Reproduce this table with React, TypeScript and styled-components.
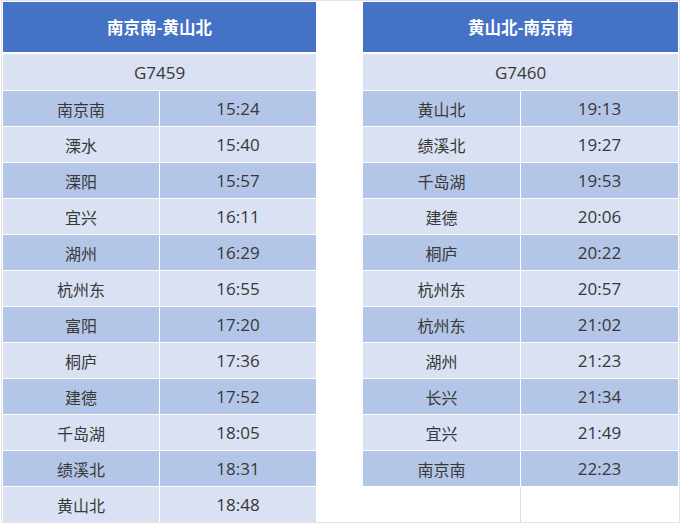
import React from "react";
import styled, { createGlobalStyle } from "styled-components";

type Stop = { station: string; time: string };

type Timetable = {
  title: string;
  train: string;
  colWidth: number;
  stops: Stop[];
  blankRows: number;
};

const _ROW_HEIGHT = 35;

const tables: Timetable[] = [
  {
    title: "南京南-黄山北",
    train: "G7459",
    colWidth: 156,
    blankRows: 0,
    stops: [
      { station: "南京南", time: "15:24" },
      { station: "溧水", time: "15:40" },
      { station: "溧阳", time: "15:57" },
      { station: "宜兴", time: "16:11" },
      { station: "湖州", time: "16:29" },
      { station: "杭州东", time: "16:55" },
      { station: "富阳", time: "17:20" },
      { station: "桐庐", time: "17:36" },
      { station: "建德", time: "17:52" },
      { station: "千岛湖", time: "18:05" },
      { station: "绩溪北", time: "18:31" },
      { station: "黄山北", time: "18:48" },
    ],
  },
  {
    title: "黄山北-南京南",
    train: "G7460",
    colWidth: 157,
    blankRows: 1,
    stops: [
      { station: "黄山北", time: "19:13" },
      { station: "绩溪北", time: "19:27" },
      { station: "千岛湖", time: "19:53" },
      { station: "建德", time: "20:06" },
      { station: "桐庐", time: "20:22" },
      { station: "杭州东", time: "20:57" },
      { station: "杭州东", time: "21:02" },
      { station: "湖州", time: "21:23" },
      { station: "长兴", time: "21:34" },
      { station: "宜兴", time: "21:49" },
      { station: "南京南", time: "22:23" },
    ],
  },
];

export default () => {
  const [outbound, inbound] = tables;
  return (
    <>
      <GlobalStyle />
      <Board>
        <Schedule table={outbound} />
        <Spacer />
        <Schedule table={inbound} />
      </Board>
    </>
  );
};

const Schedule = ({ table }: { table: Timetable }) => {
  const { title, train, colWidth, stops, blankRows } = table;
  return (
    <Grid $colWidth={colWidth}>
      <Title>{title}</Title>
      <TrainNo>{train}</TrainNo>
      {stops.map((stop, i) => (
        <React.Fragment key={i}>
          <Cell $shade={i % 2 === 0}>{stop.station}</Cell>
          <Cell $shade={i % 2 === 0} $digits>
            {stop.time}
          </Cell>
        </React.Fragment>
      ))}
      {Array.from({ length: blankRows }).map((_, i) => (
        <React.Fragment key={`blank-${i}`}>
          <BlankCell $divider />
          <BlankCell />
        </React.Fragment>
      ))}
    </Grid>
  );
};

const GlobalStyle = createGlobalStyle`
  body {
    margin: 0;
    background: #ffffff;
    font-family: "Open Sans", "Noto Sans CJK SC", sans-serif;
  }
`;

const Board = styled.div`
  /* Layout */
  display: flex;
  align-items: flex-start;
  /* Size */
  box-sizing: border-box;
  width: 679px;
  margin-left: 1px;
  padding: 1px 1px 0 1px;
  /* Color */
  background-color: #ffffff;
  border: 1px solid #e2e2e2;
`;

const Spacer = styled.div`
  /* Size */
  flex: 0 0 47px;
`;

const Grid = styled.div<{ $colWidth: number }>`
  /* Layout */
  display: grid;
  grid-template-columns: ${(p) => p.$colWidth}px ${(p) => p.$colWidth}px;
  grid-template-rows: 51px 36px;
  grid-auto-rows: ${_ROW_HEIGHT}px;
  column-gap: 1px;
  row-gap: 1px;
  /* Color */
  background-color: #ffffff;
`;

const Title = styled.div`
  /* Layout */
  grid-column: 1 / 3;
  align-self: start;
  display: flex;
  align-items: center;
  justify-content: center;
  /* Size */
  height: 50px;
  font-size: 16.5px;
  font-weight: 700;
  /* Color */
  color: #ffffff;
  background-color: #4472c4;
  /* Other */
  font-family: "Noto Sans CJK SC", sans-serif;
`;

const TrainNo = styled.div`
  /* Layout */
  grid-column: 1 / 3;
  display: flex;
  align-items: center;
  justify-content: center;
  /* Size */
  font-size: 17px;
  /* Color */
  color: #383838;
  background-color: #d9e1f2;
`;

const Cell = styled.div<{ $shade: boolean; $digits?: boolean }>`
  /* Layout */
  display: flex;
  align-items: center;
  justify-content: center;
  /* Size */
  font-size: ${(p) => (p.$digits ? "17px" : "16px")};
  /* Color */
  color: #383838;
  background-color: ${(p) => (p.$shade ? "#b4c6e7" : "#d9e1f2")};
`;

const BlankCell = styled.div<{ $divider?: boolean }>`
  /* Color */
  background-color: #ffffff;
  box-shadow: ${(p) => (p.$divider ? "1px 0 0 #dcdcdc" : "none")};
`;
